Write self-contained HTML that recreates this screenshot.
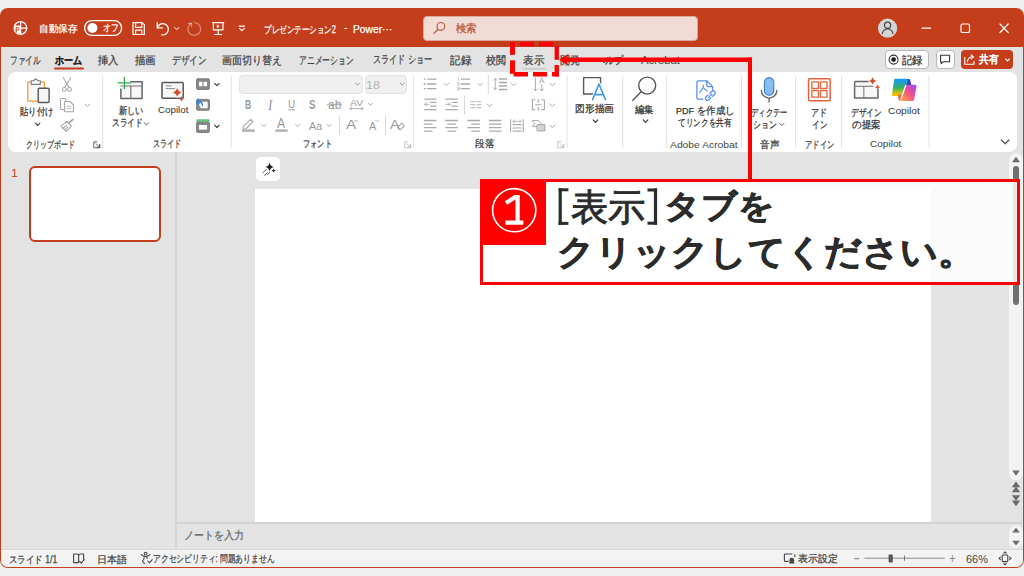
<!DOCTYPE html>
<html lang="ja">
<head>
<meta charset="utf-8">
<style>
*{box-sizing:border-box;margin:0;padding:0}
html,body{width:1024px;height:576px;overflow:hidden}
body{background:#f0f0f0;position:relative;font-family:"Liberation Sans",sans-serif;color:#424242}
.a{position:absolute}
.t{position:absolute;white-space:nowrap;line-height:1;transform-origin:0 0;-webkit-text-stroke-width:0.25px}
svg{position:absolute;overflow:visible}
</style>
</head>
<body>


<div class="a" style="left:0;top:8px;width:1024px;height:560px;background:#c43e1c;border-radius:8px"></div>
<div class="a" style="left:1px;top:47px;width:1021.5px;height:520px;background:#e3e3e3;border-radius:0 0 7px 7px"></div>
<div class="a" style="left:8px;top:72px;width:1009px;height:80px;background:#fff;border-radius:8px"></div>
<div class="a" style="left:175px;top:153px;width:2px;height:396px;background:#d6d6d6"></div>
<div class="a" style="left:29px;top:166px;width:132px;height:76px;border:2.5px solid #c43e1c;border-radius:6px;background:#fff"></div>
<div class="a" style="left:255px;top:189px;width:676px;height:333px;background:#fff"></div>
<div class="a" style="left:256px;top:157px;width:24px;height:24px;background:#fff;border-radius:5px"></div>
<div class="a" style="left:177px;top:522px;width:845px;height:1.5px;background:#d2d2d2"></div>
<div class="a" style="left:1009px;top:153px;width:14px;height:327px;background:#f3f3f3;border-radius:7px"></div>
<div class="a" style="left:1013px;top:166px;width:6px;height:139px;background:#707070;border-radius:3px"></div>
<div class="a" style="left:1009px;top:525px;width:14px;height:23px;background:#f3f3f3;border-radius:7px"></div>
<div class="a" style="left:1px;top:549px;width:1021.5px;height:18px;background:#f3f3f3;border-top:1px solid #d8d8d8;border-radius:0 0 7px 7px"></div>
<div class="a" style="left:422.5px;top:15.5px;width:275.5px;height:25px;background:#f1dbd5;border:1px solid #d9a99b;border-radius:4px"></div>
<div class="a" style="left:885px;top:50.2px;width:43.5px;height:18.6px;background:#fff;border:1px solid #b9b9b9;border-radius:4px"></div>
<div class="a" style="left:936px;top:50.2px;width:18.5px;height:18.6px;background:#fff;border:1px solid #b9b9b9;border-radius:4px"></div>
<div class="a" style="left:961.3px;top:50px;width:52px;height:19.2px;background:#c43e1c;border-radius:4px"></div>
<div class="a" style="left:238.5px;top:75.2px;width:124px;height:18.5px;background:#f0f0f0;border:1px solid #e2e2e2;border-radius:4px"></div>
<div class="a" style="left:364.5px;top:75.2px;width:42.5px;height:18.5px;background:#f0f0f0;border:1px solid #e2e2e2;border-radius:4px"></div>


<svg width="1024" height="576" style="left:0;top:0" fill="none" stroke-linecap="round" stroke-linejoin="round">
 <!-- PowerPoint logo -->
 <g stroke="#fff" stroke-width="1.3">
  <circle cx="20.4" cy="28" r="6.3"/>
  <path d="M20.6 21.7V34.3M20.6 28.2H26.6"/>
 </g>
 <path d="M14.2 25.4h6.4v8.2h-1.6a6.4 6.4 0 0 1-4.8-5z" fill="#fff"/>
 <path d="M16.2 32.2v-4.8h1.5a1.3 1.3 0 0 1 0 2.6h-1.5" stroke="#c43e1c" stroke-width="1"/>
 <!-- toggle -->
 <rect x="84.6" y="20.6" width="37" height="14.8" rx="7.4" stroke="#fff" stroke-width="1.3"/>
 <circle cx="92.4" cy="28" r="5" fill="#fff"/>
 <!-- save -->
 <g stroke="#fff" stroke-width="1.2">
  <path d="M133 22.6h9.3l2 2v9.9h-11.3z"/>
  <path d="M135.6 22.6v4.8h6.2v-4.8"/>
  <path d="M135.6 34.5v-4.3h6.2v4.3"/>
 </g>
 <!-- undo -->
 <g stroke="#fff" stroke-width="1.25">
  <path d="M157.2 22.6v5.2h5.2"/>
  <path d="M157.4 27.6a5.6 5.6 0 1 1 4.4 7.2" />
  <path d="M174.6 27.4l2.2 2.2 2.2-2.2" stroke-width="1"/>
 </g>
 <!-- redo faded -->
 <g stroke="#fff" stroke-opacity="0.4" stroke-width="1.25">
  <path d="M191.2 23.4a6.4 6.4 0 1 0 3.4-0.8"/>
  <path d="M188.2 23.3h3.4v3.4"/>
 </g>
 <!-- present -->
 <g stroke="#fff" stroke-width="1.2">
  <path d="M212.6 22.6h11.2"/>
  <path d="M213.4 22.6v7.2h9.6v-7.2"/>
  <path d="M218.2 29.8v4.6M214.6 34.5h7.2"/>
 </g>
 <path d="M216.8 24.4v3.8l3-1.9z" fill="#fff"/>
 <!-- customize -->
 <g stroke="#fff" stroke-width="1.1">
  <path d="M239.2 26.1h5.4"/>
  <path d="M239.4 28.3l2.5 2.4 2.5-2.4"/>
 </g>
 <!-- search icon -->
 <g stroke="#b4553d" stroke-width="1.2">
  <circle cx="440.9" cy="26.4" r="3.9"/>
  <path d="M438.1 29.3l-4.2 4.1"/>
 </g>
 <!-- avatar -->
 <circle cx="887.6" cy="28.2" r="9.6" fill="#d5d5d5"/>
 <g stroke="#444" stroke-width="1.2">
  <circle cx="887.6" cy="25.3" r="3.1"/>
  <path d="M882.2 33.6c0.9-3.1 2.9-4.6 5.4-4.6s4.5 1.5 5.4 4.6"/>
 </g>
 <!-- window controls -->
 <g stroke="#fff" stroke-width="1.2">
  <path d="M922 28.2h8.5"/>
  <rect x="961" y="24" width="8.5" height="8.5" rx="1.6"/>
  <path d="M1000 24l8.2 8.5M1008.2 24l-8.2 8.5"/>
 </g>
 <!-- record button icon -->
 <circle cx="893.6" cy="59.6" r="4.5" stroke="#333" stroke-width="1.1"/>
 <circle cx="893.6" cy="59.6" r="2.4" fill="#222"/>
 <!-- comment icon -->
 <path d="M940.6 55.2h9v6.5h-6.2l-2.2 1.9v-1.9h-0.6z" stroke="#333" stroke-width="1.1"/>
 <!-- share icon -->
 <g stroke="#fff" stroke-width="1.1">
  <path d="M964.8 57.4v6.8h9.2v-3"/>
  <path d="M967.3 61.6c0.6-3 2.6-4.8 5.8-4.8"/>
  <path d="M971.2 54.8l2.2 2-2.2 2.1"/>
  <path d="M1005.6 59l1.9 1.9 1.9-1.9"/>
 </g>
 <!-- tab underline -->
 <path d="M55 68.6h28" stroke="#c43e1c" stroke-width="2"/>
 <path d="M523 68.8h22" stroke="#c8c8c8" stroke-width="1.5"/>
</svg>

<svg width="1024" height="576" style="left:0;top:0" fill="none" stroke-linecap="round" stroke-linejoin="round"><path d="M102.6 76V147.5" stroke="#e1e1e1" stroke-width="1"/>
<path d="M231.3 76V147.5" stroke="#e1e1e1" stroke-width="1"/>
<path d="M413.7 76V147.5" stroke="#e1e1e1" stroke-width="1"/>
<path d="M567 76V147.5" stroke="#e1e1e1" stroke-width="1"/>
<path d="M622.8 76V147.5" stroke="#e1e1e1" stroke-width="1"/>
<path d="M666.3 76V147.5" stroke="#e1e1e1" stroke-width="1"/>
<path d="M741.6 76V147.5" stroke="#e1e1e1" stroke-width="1"/>
<path d="M795.7 76V147.5" stroke="#e1e1e1" stroke-width="1"/>
<path d="M841.6 76V147.5" stroke="#e1e1e1" stroke-width="1"/>
<path d="M929 76V147.5" stroke="#e1e1e1" stroke-width="1"/>
<rect x="27.8" y="81.8" width="16.6" height="19.4" rx="1" fill="#fafafa" stroke="#ef9a3c" stroke-width="1.3"/>
<path d="M31.2 84.4v-3.6h2.8a1.7 1.7 0 0 1 3.4 0h2.9v3.6z" fill="#fff" stroke="#7a7a7a" stroke-width="1.1"/>
<rect x="38.2" y="88.3" width="10.9" height="14.2" rx="1" fill="#f6f6f6" stroke="#585858" stroke-width="1.4"/>
<path d="M35.3 123.2l2.3 2.3 2.3 -2.3" stroke="#444" stroke-width="1.1"/>
<g stroke="#a9a9a9" stroke-width="1.1"><path d="M63.3 77.8l5.6 9.3M70.5 77.8l-5.6 9.3"/><circle cx="64.3" cy="89.4" r="1.9"/><circle cx="69.6" cy="89.4" r="1.9"/></g>
<g stroke="#a9a9a9" stroke-width="1.1"><path d="M63.6 109.6h-2.2a1 1 0 0 1-1-1V99.5a1 1 0 0 1 1-1h3.4a1 1 0 0 1 1 1v1.4"/><path d="M64.6 101.5h5.5l3.4 3.4v6.2a0.7 0.7 0 0 1-0.7 0.7h-7.5a0.7 0.7 0 0 1-0.7-0.7z"/><path d="M67.2 106.4h3.8M67.2 108.6h3.8" stroke-width="0.8"/></g>
<path d="M85.2 104.3l2.3 2.3 2.3 -2.3" stroke="#a9a9a9" stroke-width="1"/>
<g stroke="#a9a9a9" stroke-width="1.1"><path d="M61 126.2l5.8-4.9 4.6 4.6-4.9 5.6z"/><path d="M63 128.4l3.6-3.2M64.8 130l3-2.8"/><path d="M68.6 123.2l4.4-3.8" stroke-width="1.8"/></g>
<g stroke="#555" stroke-width="0.9" fill="none"><path d="M96.8 141.8h-3v6h6v-3"/><path d="M96.0 143.60000000000002l3.6 3.6M99.6 144.4v2.8h-2.8"/></g>
<g stroke="#c0c0c0" stroke-width="0.9" fill="none"><path d="M407.6 141.8h-3v6h6v-3"/><path d="M406.8 143.60000000000002l3.6 3.6M410.40000000000003 144.4v2.8h-2.8"/></g>
<g stroke="#c0c0c0" stroke-width="0.9" fill="none"><path d="M560.8 141.8h-3v6h6v-3"/><path d="M560.0 143.60000000000002l3.6 3.6M563.5999999999999 144.4v2.8h-2.8"/></g>
<path d="M130.8 81.8h11.3v16.6H120.9V89" fill="#f7f7f7" stroke="#666" stroke-width="1.5"/>
<path d="M120.9 86h21.2M130.8 86v12.4" stroke="#777" stroke-width="1.2"/>
<path d="M124.4 77.4v11.2M118.1 82.8h12.6" stroke="#35a852" stroke-width="1.3"/>
<rect x="162" y="82.5" width="21.2" height="15.8" rx="1" fill="#f7f7f7" stroke="#555" stroke-width="1.5"/>
<path d="M166.2 85.9h5M166.2 88.6h8.4" stroke="#8a8a8a" stroke-width="1"/>
<path d="M177.2 86.8Q177.9 91.8 182.9 92.5Q177.9 93.2 177.2 98.2Q176.5 93.2 171.5 92.5Q176.5 91.8 177.2 86.8z" fill="#d64b2a" stroke="#fff" stroke-width="0.6"/>
<path d="M181.4 95.9Q181.7 98.3 184.1 98.7Q181.7 99.1 181.4 101.5Q181.1 99.1 178.7 98.7Q181.1 98.3 181.4 95.9z" fill="#d64b2a"/>
<rect x="196.6" y="78.8" width="12.8" height="10.6" rx="1.2" fill="#8a8a8a" stroke="#6a6a6a" stroke-width="0.8"/>
<rect x="199" y="81.8" width="3.4" height="4.4" fill="#fff"/><rect x="203.6" y="81.8" width="3.4" height="4.4" fill="#fff"/>
<path d="M214.6 83.4l2.3 2.3 2.3 -2.3" stroke="#444" stroke-width="1.2"/>
<rect x="196.6" y="99.4" width="12.8" height="10.8" rx="1.2" fill="#8a8a8a" stroke="#6a6a6a" stroke-width="0.8"/>
<path d="M198.6 104.2l2.4 4h6.6v-6.4h-5.4z" fill="#fff"/>
<path d="M202.4 105.4a3.2 3.2 0 0 0-3.2-3.6h-1.2M198.8 99.6l-2.2 2.2 2.2 2.2" stroke="#2f86e0" stroke-width="1.5"/>
<rect x="196.6" y="122" width="12.8" height="10.4" rx="1.2" fill="#8a8a8a" stroke="#6a6a6a" stroke-width="0.8"/>
<rect x="196.3" y="119.2" width="13.4" height="2.8" rx="1" fill="#6cc07a"/>
<rect x="199" y="125" width="8" height="4.6" fill="#fff"/>
<path d="M214.6 125.2l2.3 2.3 2.3 -2.3" stroke="#444" stroke-width="1.2"/>
<path d="M144.4 122.8l2.1 2.1 2.1 -2.1" stroke="#555" stroke-width="1"/>
<path d="M355.5 83.2l2 2 2-2M400.2 83.2l2 2 2-2" stroke="#9a9a9a" stroke-width="1"/>
<g stroke="#a9a9a9" stroke-width="1.1">
<path d="M288.6 109.8h6"/>
<path d="M327.4 104.8h14"/>
<path d="M350 108.6h13M350 108.6l1.6-1.4M350 108.6l1.6 1.4M363 108.6l-1.6-1.4M363 108.6l-1.6 1.4" stroke-width="0.9"/>
<path d="M368.4 103.2l2.1 2.1 2.1 -2.1" stroke="#a9a9a9" stroke-width="1"/>
<path d="M243.2 126.6l7.6-7.2 2.2 2.2-7.2 7.4h-2.6z"/>
<path d="M261.8 124.4l2.1 2.1 2.1 -2.1" stroke="#a9a9a9" stroke-width="1"/>
<path d="M295.6 124.4l2.1 2.1 2.1 -2.1" stroke="#a9a9a9" stroke-width="1"/>
<path d="M327 124.4l2.1 2.1 2.1 -2.1" stroke="#a9a9a9" stroke-width="1"/>
<path d="M354.6 121.6l1.6-1.6 1.6 1.6M375.6 120.2l1.6 1.6 1.6-1.6" stroke-width="0.9"/>
</g>
<rect x="242" y="129.4" width="12.8" height="2.4" fill="#b0b0b0"/>
<rect x="275.4" y="129.4" width="12.2" height="2.4" fill="#b0b0b0"/>
<path d="M339.6 116.6V134.7" stroke="#d8d8d8" stroke-width="1"/>
<path d="M385.5 116.6V134.7" stroke="#d8d8d8" stroke-width="1"/>
<path d="M397.5 127.4l4.2-4.2 2.6 2.6-4.2 4.2z" stroke="#a9a9a9" stroke-width="1.1"/>
<g stroke="#ababab" stroke-width="1.3"><path d="M424.2 79.1h1.2M427.6 79.1h8.4"/><path d="M424.2 84h1.2M427.6 84h8.4"/><path d="M424.2 88.6h1.2M427.6 88.6h8.4"/><path d="M444 83.4l2.3 2.3 2.3 -2.3" stroke="#a9a9a9" stroke-width="1"/><path d="M461.2 79.1h8.4"/><path d="M461.2 84h8.4"/><path d="M461.2 88.6h8.4"/><path d="M458.4 77.6v3M457.6 82.8h1.8l-1.8 2.2h1.8M457.6 87.4h1.8v2.6h-1.8M457.8 88.7h1.6" stroke-width="0.7"/><path d="M477.8 83.4l2.3 2.3 2.3 -2.3" stroke="#a9a9a9" stroke-width="1"/><path d="M495.2 78.6v11M493.6 80.2l1.6-1.6 1.6 1.6M493.6 88l1.6 1.6 1.6-1.6" stroke-width="1"/><path d="M499.3 79h7.3"/><path d="M499.3 82.5h7.3"/><path d="M499.3 86h7.3"/><path d="M499.3 89.5h7.3"/><path d="M511.4 83.4l2.3 2.3 2.3 -2.3" stroke="#a9a9a9" stroke-width="1"/><path d="M535.4 77.6v13M533.6 89l1.8 1.8 1.8-1.8M541.8 84.6v6M540 89l1.8 1.8 1.8-1.8" stroke-width="1"/><path d="M539.4 83.2l2.4-6 2.4 6M540.2 81.2h3.2" stroke-width="0.8"/><path d="M550 83.4l2.4 2.4 2.4 -2.4" stroke="#a9a9a9" stroke-width="1"/><path d="M424.6 99.2h11.4M424.6 109.6h11.4M430.6 102.4h5.4M430.6 106.2h5.4" stroke-width="1.2"/><path d="M424.8 104.3h4.4M426.4 102.7l-1.6 1.6 1.6 1.6" stroke-width="0.9"/><path d="M445.8 99.2h11.6M445.8 109.6h11.6M452 102.4h5.4M452 106.2h5.4" stroke-width="1.2"/><path d="M446 104.3h4.4M448.8 102.7l1.6 1.6-1.6 1.6" stroke-width="0.9"/></g><path d="M464.6 96V114.3" stroke="#d8d8d8" stroke-width="1"/><path d="M488.3 75.5V93.3" stroke="#d8d8d8" stroke-width="1"/><g stroke="#c4c4c4" stroke-width="1.1"><path d="M470.8 101.6h4.2M476.8 101.6h4.2"/><path d="M470.8 104.6h4.2M476.8 104.6h4.2"/><path d="M470.8 107.6h4.2M476.8 107.6h4.2"/></g><path d="M487.2 104l2.4 2.4 2.4 -2.4" stroke="#a9a9a9" stroke-width="1"/><g stroke="#a9a9a9" stroke-width="1.1"><path d="M534.8 99.8h-2.4v9.8h2.4M541.8 99.8h2.6v9.8h-2.6M535.6 104.7h5.2M538.2 99.2v3M538.2 107.2v3"/></g><path d="M550 104l2.4 2.4 2.4 -2.4" stroke="#a9a9a9" stroke-width="1"/><g stroke="#ababab" stroke-width="1.3"><path d="M424.4 120.5H436.0"/><path d="M424.4 124.1H432.0"/><path d="M424.4 127.6H436.0"/><path d="M424.4 131.1H432.0"/><path d="M445.8 120.5H457.40000000000003"/><path d="M447.8 124.1H455.40000000000003"/><path d="M445.8 127.6H457.40000000000003"/><path d="M447.8 131.1H455.40000000000003"/><path d="M467.8 120.5H479.40000000000003"/><path d="M471.8 124.1H479.40000000000003"/><path d="M467.8 127.6H479.40000000000003"/><path d="M471.8 131.1H479.40000000000003"/><path d="M489.4 120.5H501.0"/><path d="M489.4 124.1H501.0"/><path d="M489.4 127.6H501.0"/><path d="M489.4 131.1H501.0"/><path d="M510.6 119.6v12.2M523.2 119.6v12.2M513 124.6h8M513 128h8M513 131.1h8" stroke-width="1.1"/><path d="M513 121.4h8M514.4 120l-1.4 1.4 1.4 1.4M519.6 120l1.4 1.4-1.4 1.4" stroke-width="0.8"/><path d="M532.4 120.6h6.2l2.6 3.2-2.6 2.6h-6.2l2.2-2.8z" stroke-width="1"/><rect x="537.4" y="124.6" width="7.6" height="6.4" fill="#d4d4d4" stroke-width="1"/></g><path d="M550 125.2l2.4 2.4 2.4 -2.4" stroke="#a9a9a9" stroke-width="1"/>
<path d="M596 94H583.6V77.6h17v12.4" stroke="#5a5a5a" stroke-width="1.4"/>
<path d="M592.6 99.6l6.4-15.6 6.4 15.6" stroke="#fff" stroke-width="3.6"/>
<path d="M592.6 99.6l6.4-15.6 6.4 15.6M594.8 94.6h8.4" stroke="#3a9ae0" stroke-width="1.6"/>
<path d="M593.2 120l2.3 2.3 2.3 -2.3" stroke="#444" stroke-width="1.2"/>
<circle cx="647.2" cy="85.6" r="8.5" stroke="#555" stroke-width="1.4"/>
<path d="M641.2 91.8l-8.4 8.4" stroke="#555" stroke-width="1.4"/>
<path d="M643.2 120l2.3 2.3 2.3 -2.3" stroke="#444" stroke-width="1.2"/>
<path d="M706.8 80.8h-8.4a1.5 1.5 0 0 0-1.5 1.5v15.4a1.5 1.5 0 0 0 1.5 1.5h4.4M706.8 80.8l5.8 5.8v3.6M706.8 80.8v4.4a1.4 1.4 0 0 0 1.4 1.4h4.4" stroke="#5b8ef0" stroke-width="1.3"/>
<path d="M703.2 85v2.6l-3.6 5.2M703.2 87.6l4 3.6" stroke="#5b8ef0" stroke-width="1.1"/>
<path d="M709.8 93.4l2.2-2.2a2 2 0 0 1 2.8 2.8l-2.2 2.2M710.8 97.8l-2.2 2.2a2 2 0 0 1-2.8-2.8l2.2-2.2M708.6 97.4l3.2-3.2" stroke="#5b8ef0" stroke-width="1.3"/>
<rect x="764.4" y="77.6" width="9.4" height="17.6" rx="4.7" fill="#88bdf0" stroke="#3d7fcc" stroke-width="1.1"/>
<path d="M761.4 90.4a7.7 7.7 0 0 0 15.4 0M769.1 98.2v3.8" stroke="#666" stroke-width="1.4"/>
<path d="M779.8 123.6l2.0 2.0 2.0 -2.0" stroke="#555" stroke-width="1"/>
<rect x="808.6" y="78.8" width="21.6" height="21.9" rx="1" fill="#fff" stroke="#e4643b" stroke-width="1.5"/>
<g fill="#fff" stroke="#e4643b" stroke-width="1.3"><rect x="811.8" y="81.9" width="6.6" height="6.6"/><rect x="820.4" y="81.9" width="6.6" height="6.6"/><rect x="811.8" y="90.6" width="6.6" height="6.6"/><rect x="820.4" y="90.6" width="6.6" height="6.6"/></g>
<path d="M869 81.6h-13.6a0.8 0.8 0 0 0-0.8 0.8v15.6h23.4v-8.4" fill="#f7f7f7" stroke="#666" stroke-width="1.5"/>
<path d="M854.8 86.4h18M863.8 86.4v11.4" stroke="#888" stroke-width="1.2"/>
<path d="M872.6 76.4Q873.2 80.4 877.2 81Q873.2 81.6 872.6 85.6Q872 81.6 868 81Q872 80.4 872.6 76.4z" fill="#d64b2a" stroke="#fff" stroke-width="0.6"/>
<path d="M877.6 84.6Q877.9 86.9 880.2 87.2Q877.9 87.5 877.6 89.8Q877.3 87.5 875 87.2Q877.3 86.9 877.6 84.6z" fill="#d64b2a"/>
<defs>
<linearGradient id="cpA" x1="0" y1="0" x2="0" y2="1"><stop offset="0" stop-color="#1a9cf2"/><stop offset="0.5" stop-color="#2fae6e"/><stop offset="1" stop-color="#f2c200"/></linearGradient>
<linearGradient id="cpB" x1="1" y1="0" x2="0" y2="1"><stop offset="0" stop-color="#a24ef0"/><stop offset="0.45" stop-color="#ee4f8e"/><stop offset="1" stop-color="#fb9a4a"/></linearGradient>
<linearGradient id="cpC" x1="0" y1="0" x2="1" y2="0"><stop offset="0" stop-color="#1e5fe0"/><stop offset="1" stop-color="#2a3fc8"/></linearGradient>
</defs>
<path d="M904.5 80.2h4.6l1.2 4.8h-6.6z" fill="url(#cpC)" stroke="url(#cpC)" stroke-width="2.2"/>
<path d="M895.6 80.2h10.6l-4.6 14.2h-8.2z" fill="url(#cpA)" stroke="url(#cpA)" stroke-width="3"/>
<path d="M899 95.4h4.4l-1.6 4h-2.2z" fill="#f0623a" stroke="#f0623a" stroke-width="2"/>
<path d="M906.6 86.2h8.4l-2.4 13.2h-9.8z" fill="url(#cpB)" stroke="url(#cpB)" stroke-width="3"/>
<path d="M905.6 85.6l-4.6 13.4" stroke="#fff" stroke-width="1.3"/>
<path d="M1001.4 140l3.8 3.8 3.8 -3.8" stroke="#555" stroke-width="1.3"/></svg>

<svg width="1024" height="576" style="left:0;top:0" fill="none" stroke-linecap="round" stroke-linejoin="round">
 <!-- designer sparkle in button -->
 <path d="M269.6 162.6Q270.2 166.4 274 167Q270.2 167.6 269.6 171.4Q269 167.6 265.2 167Q269 166.4 269.6 162.6z" fill="#222"/>
 <path d="M273.6 168.4Q273.9 170.3 275.8 170.6Q273.9 170.9 273.6 172.8Q273.3 170.9 271.4 170.6Q273.3 170.3 273.6 168.4z" fill="#222"/>
 <path d="M263.2 172.6l3.4-3.4M264.6 175.4l2.6-2.6M267.6 174.4l2.2-2.2" stroke="#444" stroke-width="1" stroke-dasharray="1.6 1"/>
 <!-- scrollbar arrows -->
 <g fill="#6a6a6a">
  <path d="M1012 162.2h8l-4-5.4z"/>
  <path d="M1012.2 470.6h7.6l-3.8 5.2z"/>
  <path d="M1011.8 487.2h8.4l-4.2-5.6zM1011.8 492.2h8.4l-4.2-5.6z"/>
  <path d="M1011.8 495.2h8.4l-4.2 5.6zM1011.8 500.6h8.4l-4.2 5.6z"/>
  <path d="M1012.2 532.6h7.6l-3.8-4.8z"/>
  <path d="M1012.2 540.8h7.6l-3.8 4.8z"/>
 </g>
 <!-- status icons -->
 <g stroke="#444" stroke-width="1.1">
  <path d="M78.6 555.2v7.6M73.6 554h3.2a1.8 1.8 0 0 1 1.8 1.8 1.8 1.8 0 0 1 1.8-1.8h3.2v5.2M73.6 554v8.6h4"/>
  <path d="M79.6 561.4l1.6 1.8 3-3.6"/>
  <circle cx="145.6" cy="553.6" r="1.4"/>
  <path d="M141.2 554.6c1.4 1.4 2.6 1.9 4.4 1.9s3-0.5 4.4-1.9M144.2 556.6c0.2 2-0.2 3.2-1.6 4.2 0.4 1.4 1.2 2.4 2 2.6M147 556.6v2"/>
  <path d="M147.8 561l1.6 1.8 2.8-3.2"/>
  <path d="M792 554h-6.8a0.8 0.8 0 0 0-0.8 0.8v5.8a0.8 0.8 0 0 0 0.8 0.8h3"/>
  <path d="M794.8 556.8v-2"/>
 </g>
 <circle cx="791.8" cy="560.2" r="2.4" fill="#444"/>
 <path d="M789 563.6a2.8 2 0 0 1 5.6 0z" fill="#444"/>
 <path d="M864.8 558.2h79.6" stroke="#8a8a8a" stroke-width="1"/>
 <path d="M904.5 556v4.4" stroke="#777" stroke-width="1"/>
 <rect x="888.6" y="554.4" width="4.2" height="8" rx="0.6" fill="#555"/>
 <g stroke="#444" stroke-width="1.1">
  <rect x="1002.2" y="555" width="5.6" height="6.6" rx="0.8"/>
  <path d="M1003.8 553.2l1.2-1.4 1.2 1.4M1003.8 563.4l1.2 1.4 1.2-1.4M1000.4 557.2l-1.4 1.2 1.4 1.2M1009.6 557.2l1.4 1.2-1.4 1.2"/>
 </g>
</svg>

<div class="t" style="left:39.24px;top:23.80px;font-size:10.0px;color:#fff;font-weight:400;transform:scaleX(0.964);">自動保存</div>
<div class="t" style="left:102.72px;top:23.00px;font-size:10.0px;color:#fff;font-weight:400;transform:scaleX(0.783);">オフ</div>
<div class="t" style="left:264.45px;top:24.50px;font-size:10.0px;color:#fff;font-weight:400;transform:scaleX(0.753);">プレゼンテーション2</div>
<div class="t" style="left:344.00px;top:23.10px;font-size:10.0px;color:#fff;font-weight:400;transform:scaleX(1.000);">-</div>
<div class="t" style="left:352.97px;top:24.60px;font-size:10.0px;color:#fff;font-weight:400;transform:scaleX(1.028);">Power⋯</div>
<div class="t" style="left:456.00px;top:22.50px;font-size:11.0px;color:#b4553d;font-weight:400;transform:scaleX(0.941);">検索</div>
<div class="t" style="left:10.00px;top:54.75px;font-size:11.0px;color:#424242;font-weight:400;transform:scaleX(0.695);">ファイル</div>
<div class="t" style="left:55.00px;top:54.75px;font-size:11.0px;color:#262626;font-weight:700;transform:scaleX(0.818);">ホーム</div>
<div class="t" style="left:98.00px;top:54.65px;font-size:11.0px;color:#424242;font-weight:400;transform:scaleX(0.932);">挿入</div>
<div class="t" style="left:135.00px;top:54.65px;font-size:11.0px;color:#424242;font-weight:400;transform:scaleX(0.952);">描画</div>
<div class="t" style="left:172.00px;top:54.65px;font-size:11.0px;color:#424242;font-weight:400;transform:scaleX(0.781);">デザイン</div>
<div class="t" style="left:221.79px;top:54.65px;font-size:11.0px;color:#424242;font-weight:400;transform:scaleX(0.908);">画面切り替え</div>
<div class="t" style="left:298.99px;top:54.90px;font-size:11.0px;color:#424242;font-weight:400;transform:scaleX(0.709);">アニメーション</div>
<div class="t" style="left:372.76px;top:54.25px;font-size:11.0px;color:#424242;font-weight:400;transform:scaleX(0.737);">スライド ショー</div>
<div class="t" style="left:450.00px;top:54.65px;font-size:11.0px;color:#424242;font-weight:400;transform:scaleX(0.955);">記録</div>
<div class="t" style="left:485.80px;top:54.65px;font-size:11.0px;color:#424242;font-weight:400;transform:scaleX(0.905);">校閲</div>
<div class="t" style="left:523.00px;top:54.50px;font-size:11.0px;color:#424242;font-weight:400;transform:scaleX(0.955);">表示</div>
<div class="t" style="left:560.00px;top:54.65px;font-size:11.0px;color:#424242;font-weight:400;transform:scaleX(0.932);">開発</div>
<div class="t" style="left:596.00px;top:55.25px;font-size:11.0px;color:#424242;font-weight:400;transform:scaleX(0.833);">ヘルプ</div>
<div class="t" style="left:641.00px;top:55.10px;font-size:11.0px;color:#424242;font-weight:400;transform:scaleX(1.026);-webkit-text-stroke-width:0">Acrobat</div>
<div class="t" style="left:902.20px;top:54.55px;font-size:11.0px;color:#333;font-weight:400;transform:scaleX(0.941);">記録</div>
<div class="t" style="left:979.20px;top:54.20px;font-size:11.0px;color:#fff;font-weight:400;transform:scaleX(0.891);-webkit-text-stroke-width:0.6px">共有</div>
<div class="t" style="left:20.00px;top:106.50px;font-size:9.5px;color:#333;font-weight:400;transform:scaleX(0.831);">貼り付け</div>
<div class="t" style="left:25.60px;top:140.10px;font-size:9.5px;color:#444;font-weight:400;transform:scaleX(0.699);">クリップボード</div>
<div class="t" style="left:119.00px;top:105.50px;font-size:9.5px;color:#333;font-weight:400;transform:scaleX(0.823);">新しい</div>
<div class="t" style="left:112.03px;top:118.20px;font-size:9.5px;color:#333;font-weight:400;transform:scaleX(0.768);">スライド</div>
<div class="t" style="left:157.80px;top:105.30px;font-size:9.5px;color:#333;font-weight:400;transform:scaleX(1.030);-webkit-text-stroke-width:0">Copilot</div>
<div class="t" style="left:153.08px;top:139.00px;font-size:9.5px;color:#444;font-weight:400;transform:scaleX(0.716);">スライド</div>
<div class="t" style="left:366.25px;top:80.50px;font-size:10.0px;color:#b4b4b4;font-weight:400;transform:scaleX(1.250);-webkit-text-stroke-width:0">18</div>
<div class="t" style="left:302.58px;top:139.40px;font-size:9.5px;color:#444;font-weight:400;transform:scaleX(0.722);">フォント</div>
<div class="t" style="left:474.80px;top:139.40px;font-size:9.5px;color:#444;font-weight:400;transform:scaleX(0.955);">段落</div>
<div class="t" style="left:574.62px;top:104.00px;font-size:9.5px;color:#333;font-weight:400;transform:scaleX(0.977);">図形描画</div>
<div class="t" style="left:635.00px;top:104.50px;font-size:9.5px;color:#333;font-weight:400;transform:scaleX(0.938);">編集</div>
<div class="t" style="left:675.85px;top:106.15px;font-size:9.5px;color:#333;font-weight:400;transform:scaleX(0.949);">PDF を作成し</div>
<div class="t" style="left:678.00px;top:117.90px;font-size:9.5px;color:#333;font-weight:400;transform:scaleX(0.764);">てリンクを共有</div>
<div class="t" style="left:670.30px;top:140.10px;font-size:9.5px;color:#444;font-weight:400;transform:scaleX(1.086);-webkit-text-stroke-width:0">Adobe Acrobat</div>
<div class="t" style="left:751.27px;top:107.90px;font-size:9.5px;color:#333;font-weight:400;transform:scaleX(0.729);">ディクテー</div>
<div class="t" style="left:753.01px;top:119.50px;font-size:9.5px;color:#333;font-weight:400;transform:scaleX(0.793);">ション</div>
<div class="t" style="left:759.50px;top:140.25px;font-size:9.5px;color:#444;font-weight:400;transform:scaleX(0.960);">音声</div>
<div class="t" style="left:811.10px;top:107.50px;font-size:9.5px;color:#333;font-weight:400;transform:scaleX(0.800);">アド</div>
<div class="t" style="left:811.54px;top:119.50px;font-size:9.5px;color:#333;font-weight:400;transform:scaleX(0.761);">イン</div>
<div class="t" style="left:804.66px;top:139.75px;font-size:9.5px;color:#444;font-weight:400;transform:scaleX(0.737);">アドイン</div>
<div class="t" style="left:850.93px;top:108.00px;font-size:9.5px;color:#333;font-weight:400;transform:scaleX(0.771);">デザイン</div>
<div class="t" style="left:852.30px;top:120.00px;font-size:9.5px;color:#333;font-weight:400;transform:scaleX(0.962);">の提案</div>
<div class="t" style="left:888.40px;top:105.65px;font-size:9.5px;color:#333;font-weight:400;transform:scaleX(1.077);-webkit-text-stroke-width:0">Copilot</div>
<div class="t" style="left:869.90px;top:139.25px;font-size:9.5px;color:#444;font-weight:400;transform:scaleX(1.060);-webkit-text-stroke-width:0">Copilot</div>
<div class="t" style="left:11.18px;top:167.85px;font-size:11.0px;color:#c43e1c;font-weight:400;transform:scaleX(1.120);-webkit-text-stroke-width:0">1</div>
<div class="t" style="left:184.10px;top:529.95px;font-size:11.0px;color:#666;font-weight:400;transform:scaleX(0.903);">ノートを入力</div>
<div class="t" style="left:9.45px;top:554.50px;font-size:10.0px;color:#444;font-weight:400;transform:scaleX(0.849);">スライド 1/1</div>
<div class="t" style="left:97.00px;top:554.50px;font-size:10.0px;color:#444;font-weight:400;transform:scaleX(1.000);">日本語</div>
<div class="t" style="left:153.02px;top:554.00px;font-size:10.0px;color:#444;font-weight:400;transform:scaleX(0.781);">アクセシビリティ: 問題ありません</div>
<div class="t" style="left:797.80px;top:553.60px;font-size:10.0px;color:#444;font-weight:400;transform:scaleX(0.992);">表示設定</div>
<div class="t" style="left:854.40px;top:554.00px;font-size:10.0px;color:#888;font-weight:400;transform:scaleX(0.980);">−</div>
<div class="t" style="left:949.00px;top:551.00px;font-size:14.0px;color:#888;font-weight:400;transform:scaleX(0.825);-webkit-text-stroke-width:0">+</div>
<div class="t" style="left:966.00px;top:554.60px;font-size:10.0px;color:#444;font-weight:400;transform:scaleX(1.095);-webkit-text-stroke-width:0">66%</div>
<div class="t" style="left:244.80px;top:99.30px;font-size:12.25px;color:#9a9a9a;font-weight:700;transform:scaleX(0.700);-webkit-text-stroke-width:0">B</div>
<div class="t" style="left:267.80px;top:98.30px;font-size:14.25px;color:#9a9a9a;font-weight:400;transform:scaleX(0.920);font-family:'Liberation Serif',serif;font-style:italic;-webkit-text-stroke-width:0">I</div>
<div class="t" style="left:287.54px;top:99.30px;font-size:11.5px;color:#9a9a9a;font-weight:400;transform:scaleX(0.857);-webkit-text-stroke-width:0">U</div>
<div class="t" style="left:309.00px;top:99.30px;font-size:12.25px;color:#9a9a9a;font-weight:700;transform:scaleX(0.800);-webkit-text-stroke-width:0">S</div>
<div class="t" style="left:328.00px;top:99.30px;font-size:12.25px;color:#9a9a9a;font-weight:400;transform:scaleX(0.985);-webkit-text-stroke-width:0">ab</div>
<div class="t" style="left:349.70px;top:99.30px;font-size:8.5px;color:#9a9a9a;font-weight:400;transform:scaleX(1.218);-webkit-text-stroke-width:0">AV</div>
<div class="t" style="left:277.20px;top:116.30px;font-size:14.0px;color:#9a9a9a;font-weight:400;transform:scaleX(0.860);-webkit-text-stroke-width:0">A</div>
<div class="t" style="left:309.00px;top:120.80px;font-size:10.75px;color:#9a9a9a;font-weight:400;transform:scaleX(1.000);-webkit-text-stroke-width:0">Aa</div>
<div class="t" style="left:346.00px;top:118.00px;font-size:13.25px;color:#9a9a9a;font-weight:400;transform:scaleX(1.156);-webkit-text-stroke-width:0">A</div>
<div class="t" style="left:368.60px;top:120.60px;font-size:11.5px;color:#9a9a9a;font-weight:400;transform:scaleX(0.950);-webkit-text-stroke-width:0">A</div>
<div class="t" style="left:389.80px;top:118.00px;font-size:13.25px;color:#9a9a9a;font-weight:400;transform:scaleX(1.089);-webkit-text-stroke-width:0">A</div>

<div class="a" style="left:480px;top:179px;width:540px;height:106px;border:3.5px solid #ff0000;background:rgba(255,255,255,0.84)"></div>
<div class="a" style="left:480px;top:179px;width:66px;height:66px;background:#ff0000"></div>
<svg width="1024" height="576" style="left:0;top:0" fill="none">
 <circle cx="514.2" cy="210.2" r="21.6" stroke="#fff" stroke-width="1.6"/>
 <path d="M506 203l9-5.8h2.6v25.4M505.4 222.6h18" stroke="#fff" stroke-width="4.2"/>
</svg>
<svg width="1024" height="576" style="left:0;top:0"><g fill="#2b2b2b">
 <rect x="558.6" y="188.3" width="3.2" height="36.6"/><rect x="558.6" y="188.3" width="9.8" height="3"/><rect x="558.6" y="221.9" width="9.8" height="3"/>
 <rect x="653.9" y="188.5" width="3.2" height="36.2"/><rect x="647.5" y="188.5" width="9.6" height="3"/><rect x="647.5" y="221.7" width="9.6" height="3"/>
</g></svg>

<div class="t" style="left:571.00px;top:188.70px;font-size:37.0px;color:#2b2b2b;font-weight:400;transform:scaleX(1.008);-webkit-text-stroke:0.9px #2b2b2b">表示</div>
<div class="t" style="left:664.47px;top:190.50px;font-size:31.75px;color:#2b2b2b;font-weight:700;transform:scaleX(1.116);-webkit-text-stroke:0.7px #2b2b2b">タブを</div>
<div class="t" style="left:556.98px;top:234.60px;font-size:34.5px;color:#2b2b2b;font-weight:700;transform:scaleX(1.059);-webkit-text-stroke:0.7px #2b2b2b">クリックしてください。</div>

<svg width="1024" height="576" style="left:0;top:0">
 <g fill="#ff0000">
  <rect x="510" y="42" width="5" height="12.8"/>
  <rect x="520" y="42" width="14" height="4.4"/>
  <rect x="539" y="42" width="14.5" height="4.4"/>
  <rect x="554.6" y="46" width="4.3" height="13.8"/>
  <rect x="510" y="60.3" width="5" height="13.5"/>
  <rect x="513.6" y="72" width="14.4" height="4.5"/>
  <rect x="533" y="72" width="14" height="4.5"/>
  <rect x="552" y="72" width="6.9" height="4.5"/>
  <rect x="554.6" y="65" width="4.3" height="11.5"/>
  <rect x="564" y="57.5" width="188" height="4.5"/>
  <rect x="748" y="57.5" width="4" height="122"/>
  <path d="M559.2 60l9.6-6.6-3.2 6.6 3.2 5.8z"/>
 </g>
</svg>

</body></html>
